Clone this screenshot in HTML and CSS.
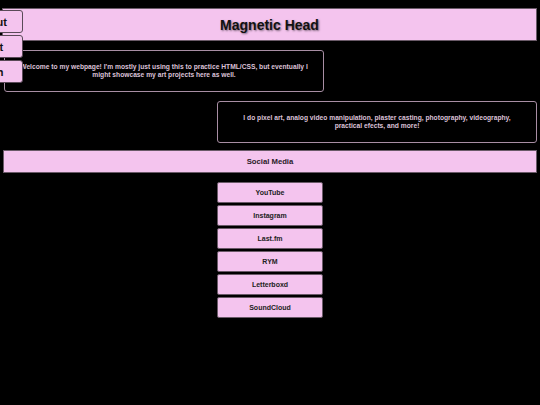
FILE: index.html
```html
<!DOCTYPE html>
<html>
<head>
<meta charset="utf-8">
<link rel="stylesheet" href="styles.css">
</head>
<body>
<nav class="nav">
  <a class="nav-btn">About</a>
  <a class="nav-btn">Chat</a>
  <a class="nav-btn">Tech</a>
</nav>
<header class="header">
  <h1 class="title">Magnetic Head</h1>
</header>
<section class="row row-left">
  <div class="box welcome">Welcome to my webpage! I'm mostly just using this to practice HTML/CSS, but eventually I might showcase my art projects here as well.</div>
</section>
<section class="row row-right">
  <div class="box skills">I do pixel art, analog video manipulation, plaster casting, photography, videography, practical efects, and more!</div>
</section>
<div class="bar">Social Media</div>
<div class="links">
  <a class="link">YouTube</a>
  <a class="link">Instagram</a>
  <a class="link">Last.fm</a>
  <a class="link">RYM</a>
  <a class="link">Letterboxd</a>
  <a class="link">SoundCloud</a>
</div>
</body>
</html>
```
FILE: styles.css
```css
html, body {
  margin: 0;
  padding: 0;
  background: #000;
}
body {
  font-family: "Liberation Sans", Arial, sans-serif;
  font-weight: bold;
  padding: 8px 3px 0 3px;
  width: 534px;
}
.nav {
  position: absolute;
  left: -41px;
  top: 10px;
  display: flex;
  flex-direction: column;
  gap: 2px;
  z-index: 2;
}
.nav-btn {
  display: flex;
  align-items: center;
  justify-content: center;
  width: 62px;
  height: 21px;
  background: #f4c4ee;
  border: 1px solid #5a4a58;
  border-radius: 3px;
  color: #111;
  font-size: 11px;
}
.header {
  background: #f4c4ee;
  border: 1px solid #6a5a68;
  height: 31px;
  margin-left: -1px;
  display: flex;
  align-items: center;
  justify-content: center;
}
.title {
  margin: 0;
  font-size: 14px;
  color: #111;
  text-shadow: 1px 1px 2px rgba(0,0,0,0.5);
}
.row {
  display: flex;
}
.row-left {
  justify-content: flex-start;
  margin-top: 9px;
}
.row-right {
  justify-content: flex-end;
  margin-top: 9px;
}
.box {
  box-sizing: border-box;
  width: 320px;
  height: 42px;
  border: 1px solid #a88ea4;
  border-radius: 3px;
  color: #dcc2d8;
  font-size: 6.7px;
  line-height: 8px;
  text-align: center;
  display: flex;
  align-items: center;
  justify-content: center;
  padding: 0 12px;
}
.welcome {
  margin-left: 1px;
}
.skills {
  padding: 0 18px;
}
.bar {
  margin-top: 7px;
  height: 21px;
  background: #f4c4ee;
  border: 1px solid #6a5a68;
  display: flex;
  align-items: center;
  justify-content: center;
  color: #2a1a28;
  font-size: 7.7px;
}
.links {
  margin-top: 9px;
  display: flex;
  flex-direction: column;
  align-items: center;
  gap: 2px;
}
.link {
  box-sizing: border-box;
  width: 106px;
  height: 21px;
  background: #f4c4ee;
  border: 1px solid #6a5a68;
  border-radius: 2px;
  display: flex;
  align-items: center;
  justify-content: center;
  color: #222;
  font-size: 7px;
}
```
